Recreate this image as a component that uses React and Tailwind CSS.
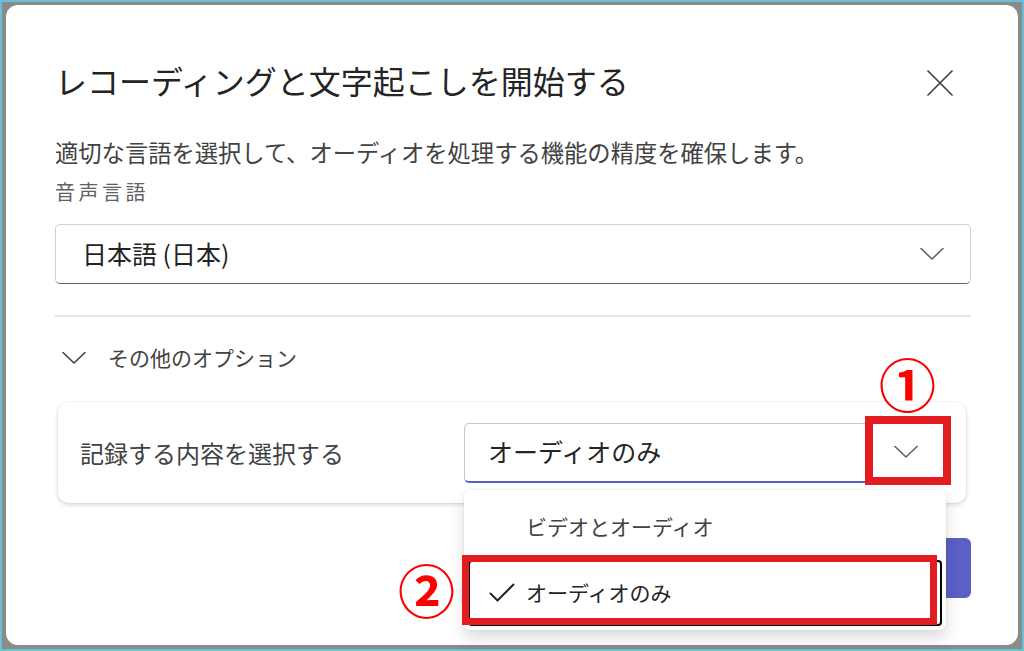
import React from "react";

const jp = { fontFamily: '"Noto Sans CJK JP", "Noto Sans", sans-serif' };

function Chevron({ className = "", color = "#616161", w = 24 }) {
	return (
		<svg width={w} height={w / 2 + 2} viewBox="0 0 24 14" fill="none" className={className}>
			<path d="M1 1.5 L12 12 L23 1.5" stroke={color} strokeWidth="1.6" strokeLinecap="round" strokeLinejoin="round" />
		</svg>
	);
}

function Close() {
	return (
		<svg width="28" height="28" viewBox="0 0 28 28" fill="none">
			<path d="M2 2 L26 26 M26 2 L2 26" stroke="#424242" strokeWidth="1.7" strokeLinecap="round" />
		</svg>
	);
}

function Check() {
	return (
		<svg width="26" height="20" viewBox="0 0 26 20" fill="none">
			<path d="M1.5 10.5 L8.5 17.5 L24.5 1.5" stroke="#242424" strokeWidth="2" strokeLinecap="round" strokeLinejoin="round" />
		</svg>
	);
}

export default function App() {
	return (
		<div
			style={jp}
			className="relative w-[1024px] h-[651px] border-[2px] border-[#67c2d4] bg-[#8b8b8b] pt-[3px] pl-[4px] pr-[4px] pb-[4px] overflow-hidden"
		>
			<div className="w-full h-full bg-white rounded-[12px] pt-[55px] pl-[49px] pr-[47px] flex flex-col">
				{/* Header */}
				<div className="flex items-center justify-between h-[40px]">
					<h1 className="text-[32px] leading-[40px] text-[#242424] font-normal">
						レコーディングと文字起こしを開始する
					</h1>
					<button aria-label="閉じる" className="mr-[17px] mt-[6px]">
						<Close />
					</button>
				</div>

				<p className="mt-[36px] text-[23.3px] leading-[32px] text-[#424242]">
					適切な言語を選択して、オーディオを処理する機能の精度を確保します。
				</p>

				<label className="mt-[10px] text-[20px] leading-[28px] tracking-[3.5px] text-[#616161]">音声言語</label>

				{/* Language select */}
				<div className="mt-[18px] h-[60px] flex items-center justify-between rounded-[5px] border border-[#d1d1d1] border-b-[#616161] pl-[26px] pr-[26px]">
					<span className="text-[25px] text-[#242424]">日本語 (日本)</span>
					<Chevron />
				</div>

				<hr className="mt-[31px] border-t-[2px] border-[#e6e6e6]" />

				{/* Other options */}
				<div className="mt-[21px] h-[40px] flex items-center gap-[22px] pl-[7px]">
					<Chevron color="#424242" />
					<span className="text-[21px] text-[#424242]">その他のオプション</span>
				</div>

				{/* Card */}
				<div className="mt-[24px] mx-[3px] mr-[5px] h-[101px] rounded-[10px] bg-white shadow-[0_0_2px_rgba(0,0,0,0.12),0_2px_4px_rgba(0,0,0,0.14)] flex items-center justify-between pl-[22px] pr-[17px]">
					<span className="text-[24px] text-[#424242]">記録する内容を選択する</span>
					<div className="relative w-[485px] h-[60px]">
						<div className="w-full h-full rounded-[5px] border border-[#c8c8c8] border-b-[2px] border-b-[#5b5fc7] flex items-center justify-between pl-[23px] pr-[30px]">
							<span className="text-[25px] text-[#242424]">オーディオのみ</span>
							<Chevron />
						</div>
						{/* Dropdown menu */}
						<div className="absolute left-0 top-[67px] w-[482px] z-20 rounded-[6px] bg-white p-[4px] shadow-[0_8px_16px_rgba(0,0,0,0.14),0_0_2px_rgba(0,0,0,0.12)]">
							<div className="h-[66px] flex items-center pl-[58px] text-[21px] text-[#424242]">
								ビデオとオーディオ
							</div>
							<div className="h-[66px] flex items-center gap-[11px] pl-[19px] text-[21px] text-[#242424] rounded-[4px] border-[2px] border-black">
								<Check />
								<span>オーディオのみ</span>
							</div>
						</div>
					</div>
				</div>

				{/* Footer */}
				<div className="mt-[35px] flex justify-end">
					<button className="w-[120px] h-[60px] rounded-[6px] bg-[#5b5fc7] text-white text-[20px]">開始</button>
				</div>
			</div>

			{/* Annotations */}
			<div className="absolute z-30 left-[863px] top-[414px] w-[86px] h-[69px] border-[8px] border-[#e21c21]" />
			<div className="absolute z-30 left-[460px] top-[553px] w-[475px] h-[70px] border-[7px] border-[#e21c21]" />
			<span className="absolute z-30 left-[877px] top-[345px] text-[57px] leading-[70px] font-bold text-[#ff0000]">①</span>
			<span className="absolute z-30 left-[396px] top-[551px] text-[57px] leading-[70px] font-bold text-[#ff0000]">②</span>
		</div>
	);
}
